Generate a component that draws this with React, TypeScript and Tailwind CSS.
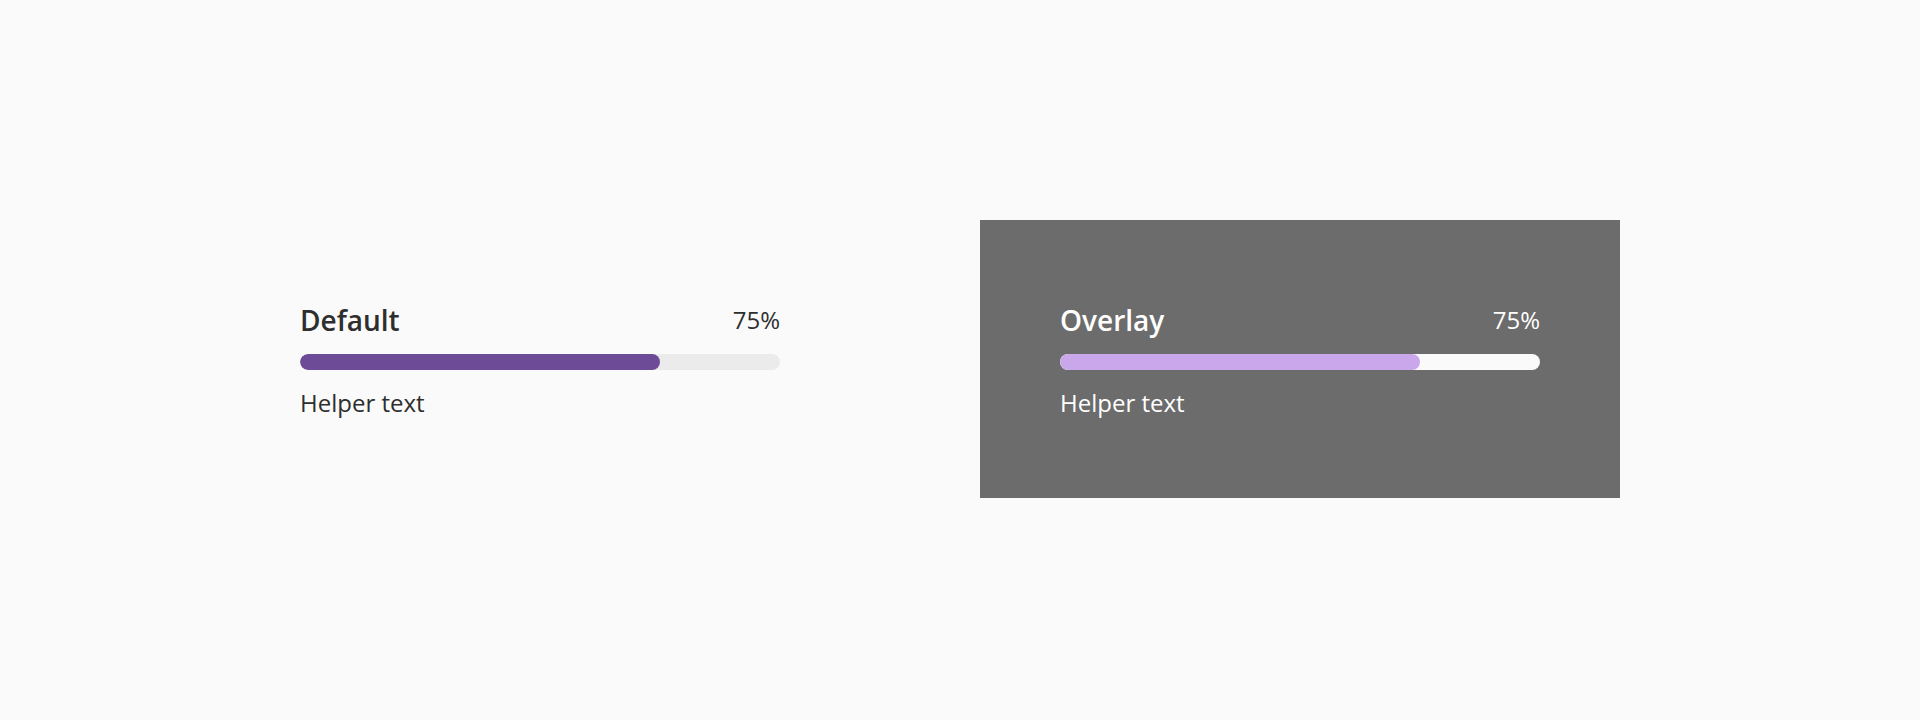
import React from "react";

type ProgressProps = {
  label: string;
  value: number;
  helper: string;
  overlay?: boolean;
};

function ProgressBar({ label, value, helper, overlay }: ProgressProps) {
  return (
    <div className="w-[480px]">
      <div className="flex items-center justify-between mb-4">
        <span
          className={
            overlay
              ? "text-[28px] leading-[36px] font-semibold text-white"
              : "text-[28px] leading-[36px] font-semibold text-[#2e2e2e]"
          }
        >
          {label}
        </span>
        <span className={overlay ? "text-[24px] leading-[32px] text-white" : "text-[24px] leading-[32px] text-[#2e2e2e]"}>
          {value}%
        </span>
      </div>
      <div className={overlay ? "h-4 w-full rounded-full bg-[#fafafa] overflow-hidden" : "h-4 w-full rounded-full bg-[#ebebeb] overflow-hidden"}>
        <div
          className={overlay ? "h-full rounded-full bg-[#c9a7ea]" : "h-full rounded-full bg-[#6e4b96]"}
          style={{ width: `${value}%` }}
        />
      </div>
      <div className={overlay ? "mt-[17px] text-[24px] leading-[32px] text-white" : "mt-[17px] text-[24px] leading-[32px] text-[#2e2e2e]"}>
        {helper}
      </div>
    </div>
  );
}

export default function App() {
  return (
    <div
      className="w-full h-[720px] bg-[#fafafa] flex items-center justify-center gap-[200px]"
      style={{ fontFamily: '"Open Sans", "Noto Sans", sans-serif' }}
    >
      <ProgressBar label="Default" value={75} helper="Helper text" />
      <div className="w-[640px] h-[278px] mb-[2px] pt-[2px] bg-[#6c6c6c] flex items-center justify-center">
        <ProgressBar label="Overlay" value={75} helper="Helper text" overlay />
      </div>
    </div>
  );
}
